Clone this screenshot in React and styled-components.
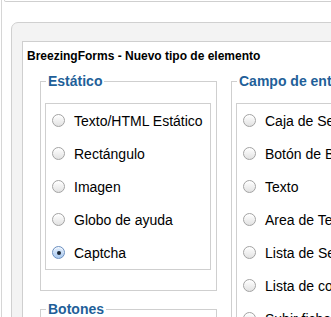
import React from 'react';
import styled, { createGlobalStyle } from 'styled-components';

const GlobalStyle = createGlobalStyle`
  html, body {
    margin: 0;
    padding: 0;
    background: #fff;
    overflow: hidden;
  }
  body {
    font-family: "Liberation Sans", Arial, Helvetica, sans-serif;
    color: #000;
  }
`;

const estatico = ['Texto/HTML Estático', 'Rectángulo', 'Imagen', 'Globo de ayuda', 'Captcha'];
const campos = [
  'Caja de Selección',
  'Botón de Búsqueda',
  'Texto',
  'Area de Texto',
  'Lista de Selección',
  'Lista de combinación',
  'Subir fichero',
];

const App = () => {
  return (
    <Pagina>
      <GlobalStyle />
      <BarraSuperior />
      <Panel>
        <Tarjeta>
          <Titulo>BreezingForms - Nuevo tipo de elemento</Titulo>
          <Columnas>
            <Columna>
              <Grupo>
                <Leyenda>Estático</Leyenda>
                <Lista>
                  {estatico.map((t) => (
                    <Opcion key={t}>
                      <Radio $checked={t === 'Captcha'} />
                      {t}
                    </Opcion>
                  ))}
                </Lista>
              </Grupo>
              <Grupo>
                <Leyenda>Botones</Leyenda>
                <Lista>
                  <Opcion>
                    <Radio />
                    Botón normal
                  </Opcion>
                </Lista>
              </Grupo>
            </Columna>
            <Columna>
              <Grupo>
                <Leyenda>Campo de entrada</Leyenda>
                <Lista>
                  {campos.map((t) => (
                    <Opcion key={t}>
                      <Radio />
                      {t}
                    </Opcion>
                  ))}
                </Lista>
              </Grupo>
            </Columna>
          </Columnas>
        </Tarjeta>
      </Panel>
    </Pagina>
  );
};

export default App;

const Pagina = styled.div`
  margin-left: 1px;
  border-left: 1px solid #d6d6d6;
  width: 330px;
  height: 317px;
  overflow: hidden;
`;

const BarraSuperior = styled.div`
  height: 1px;
  width: 420px;
  margin-left: 2px;
  border: 1px solid #cfcfcf;
  border-top: none;
  border-radius: 0 0 5px 5px;
`;

const Panel = styled.div`
  margin: 20px 0 0 9px;
  width: 420px;
  padding: 18px 0 0 10px;
  background: #f3f3f3;
  border: 1px solid #d0d0d0;
  border-radius: 7px;
`;

const Tarjeta = styled.div`
  background: #fff;
  border: 1px solid #cfcfcf;
  padding: 7px 0 0 4px;
  height: 400px;
`;

const Titulo = styled.div`
  font-size: 12px;
  line-height: 14px;
  font-weight: bold;
`;

const Columnas = styled.div`
  display: flex;
  gap: 14px;
  margin: 10px 0 0 13px;
`;

const Columna = styled.div`
  display: flex;
  flex-direction: column;
  gap: 10px;
`;

const Grupo = styled.fieldset`
  box-sizing: border-box;
  width: 177px;
  margin: 0;
  padding: 14px 5px 20px 4px;
  border: 1px solid #cfcfcf;
  min-width: 0;
`;

const Leyenda = styled.legend`
  margin-left: 1px;
  padding: 0 2px;
  font-size: 14px;
  line-height: 16px;
  font-weight: bold;
  color: #1f5f99;
`;

const Lista = styled.div`
  border: 1px solid #cfcfcf;
`;

const Opcion = styled.label`
  display: flex;
  align-items: center;
  gap: 9px;
  height: 33px;
  padding-left: 6px;
  font-size: 14px;
  white-space: nowrap;
`;

const Radio = styled.span`
  position: relative;
  box-sizing: border-box;
  flex: none;
  width: 13px;
  height: 13px;
  border-radius: 50%;
  border: 1px solid ${(p) => (p.$checked ? '#6b8fbf' : '#a3a3a3')};
  background: ${(p) =>
    p.$checked
      ? 'linear-gradient(#e3eefc, #a9c9ef)'
      : 'linear-gradient(#ffffff, #e2e2e2)'};
  box-shadow: inset 0 1px 1px rgba(255, 255, 255, 0.8);

  &::after {
    content: '';
    display: ${(p) => (p.$checked ? 'block' : 'none')};
    position: absolute;
    left: 50%;
    top: 50%;
    width: 4px;
    height: 4px;
    margin: -2px 0 0 -2px;
    border-radius: 50%;
    background: #1b2736;
  }
`;
